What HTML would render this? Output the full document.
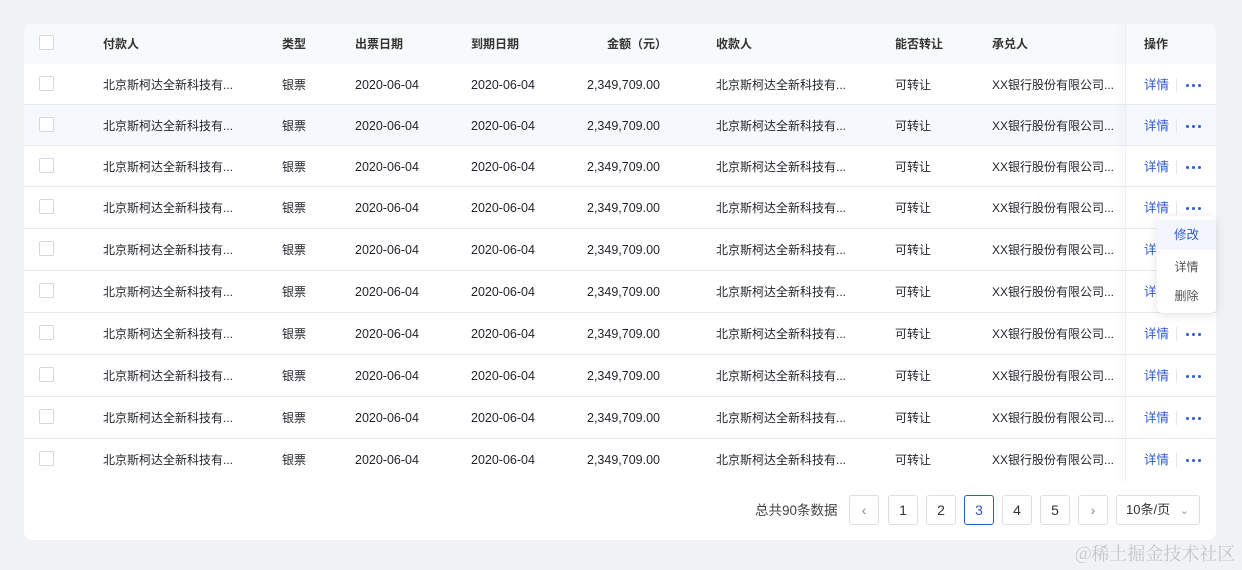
<!DOCTYPE html>
<html><head><meta charset="utf-8"><style>
*{margin:0;padding:0;box-sizing:border-box}
body{width:1242px;height:570px;background:#f0f2f5;font-family:"Liberation Sans","Noto Sans CJK SC",sans-serif;font-size:12px;color:#1f2329;position:relative;overflow:hidden}
.card{position:absolute;left:24px;top:24px;width:1192px;height:516px;background:#fff;border-radius:8px;overflow:hidden}
.hd{position:absolute;left:0;top:0;width:1192px;height:40px;background:#f8f9fa}
.row{position:absolute;left:0;width:1192px;border-bottom:1px solid #e8eaee}
.t{position:absolute;white-space:nowrap;line-height:14px}
.n{font-size:12.5px}
.cb{position:absolute;left:15px;width:15px;height:15px;border:1px solid #d4d7dc;border-radius:2px;background:#fff}
.blue{color:#2d5bd1}
.dot{position:absolute;width:3px;height:3px;border-radius:50%;background:#2d5bd1}
.sep{position:absolute;width:1px;height:14px;background:#e5e6eb}
.pg{position:absolute;top:495px;width:30px;height:30px;border:1px solid #dcdfe6;border-radius:3px;background:#fff;text-align:center;line-height:28px;font-size:14px;color:#333}
.menu{position:absolute;left:1157px;top:216px;width:59px;height:97px;background:#fff;border-radius:6px;box-shadow:0 2px 10px rgba(0,0,0,0.12)}
</style></head><body>
<div class="card"><div class="hd"></div></div>
<div id="rows"></div>
<div class="menu">
<div style="position:absolute;left:0;top:4px;width:59px;height:30px;background:#f3f6fd;color:#2d5bd1;text-align:center;line-height:30px;font-size:12.5px">修改</div>
<div style="position:absolute;left:0;top:44px;width:59px;text-align:center;color:#555;line-height:14px">详情</div>
<div style="position:absolute;left:0;top:73px;width:59px;text-align:center;color:#555;line-height:14px">删除</div>
</div>
<div class="t" style="left:755px;top:504px;font-size:13.5px;color:#444">总共90条数据</div>
<div class="pg" style="left:849px;color:#888">&#8249;</div>
<div class="pg" style="left:888px">1</div>
<div class="pg" style="left:926px">2</div>
<div class="pg" style="left:964px;border-color:#2d5bd1;color:#2d5bd1">3</div>
<div class="pg" style="left:1002px">4</div>
<div class="pg" style="left:1040px">5</div>
<div class="pg" style="left:1078px;color:#888">&#8250;</div>
<div class="pg" style="left:1116px;width:84px;font-size:13px;text-align:left;padding-left:9px">10条/页 <span style="color:#999;font-size:11px;margin-left:6px">&#8964;</span></div>
<div class="t" style="left:1075px;top:543px;font-size:18px;line-height:20px;color:#c4c6ca;font-family:'Noto Serif CJK SC',serif">@稀土掘金技术社区</div>
<script>
var T=[64,105,146,187,229,271,313,355,397,439,481];
var s='';
s+='<div class="cb" style="left:39px;top:35px"></div>';
var hdr=[[103,'付款人'],[282,'类型'],[355,'出票日期'],[471,'到期日期'],[607,'金额（元）'],[716,'收款人'],[895,'能否转让'],[992,'承兑人'],[1144,'操作']];
hdr.forEach(function(c){s+='<div class="t" style="left:'+c[0]+'px;top:37px;font-weight:bold;color:#333">'+c[1]+'</div>'});
for(var i=0;i<10;i++){
 var a=T[i],b=T[i+1],m=Math.round((a+b)/2)-7;
 s+='<div class="row" style="left:24px;top:'+a+'px;height:'+(b-a)+'px;background:'+(i==1?'#f5f8fd':'#fff')+(i==9?';border-bottom:none':'')+'"></div>';
 s+='<div class="cb" style="left:39px;top:'+(m-2)+'px"></div>';
 var cols=[[103,'北京斯柯达全新科技有...'],[282,'银票'],[355,'2020-06-04',1],[471,'2020-06-04',1],[587,'2,349,709.00',1],[716,'北京斯柯达全新科技有...'],[895,'可转让'],[992,'XX银行股份有限公司...']];
 cols.forEach(function(c){s+='<div class="t'+(c[2]?' n':'')+'" style="left:'+c[0]+'px;top:'+m+'px">'+c[1]+'</div>'});
 s+='<div class="t blue" style="left:1144px;top:'+m+'px;font-size:12.5px">详情</div>';
 s+='<div class="sep" style="left:1176px;top:'+m+'px"></div>';
 [1186,1192,1198].forEach(function(x){s+='<div class="dot" style="left:'+x+'px;top:'+(m+6)+'px"></div>'});
}
s+='<div style="position:absolute;left:1125px;top:24px;width:1px;height:457px;box-shadow:-3px 0 6px rgba(0,0,0,0.12);background:#eceef1"></div>';
document.getElementById('rows').innerHTML=s;
</script>
</body></html>
